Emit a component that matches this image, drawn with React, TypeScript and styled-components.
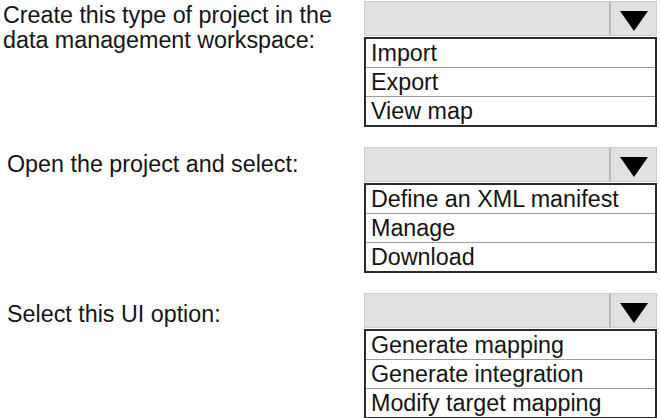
import React from "react";
import styled, { createGlobalStyle } from "styled-components";

const Global = createGlobalStyle`
  html, body { margin: 0; padding: 0; background: #ffffff; }
  body { font-family: "Liberation Sans", Arial, sans-serif; color: #141414; }
`;

const Page = styled.div`
  width: 660px;
  height: 418px;
  box-sizing: border-box;
  padding: 1px 3px 0 0;
  display: flex;
  flex-direction: column;
  gap: 20px;
  overflow: hidden;
`;

const Section = styled.section`
  display: grid;
  grid-template-columns: 1fr 293px;
  align-items: start;
`;

const Label = styled.div<{ $indent: number; $top: number }>`
  font-size: 23.3px;
  line-height: 25px;
  padding-left: ${(p) => p.$indent}px;
  margin-top: ${(p) => p.$top}px;
  color: #151515;
`;

const Widget = styled.div`
  display: flex;
  flex-direction: column;
  gap: 1px;
`;

const SelectBox = styled.div`
  height: 35px;
  box-sizing: border-box;
  display: flex;
  background: #e1e1e1;
  border: 1px solid #cdcdcd;
`;

const Field = styled.div`
  flex: 1;
`;

const ArrowButton = styled.div`
  width: 47px;
  border-left: 2px solid #b9b9b9;
  display: flex;
  align-items: center;
  justify-content: center;
  padding-top: 4px;
  box-sizing: border-box;
`;

const List = styled.ul`
  list-style: none;
  margin: 0;
  padding: 0;
  border: 2px solid #2b2b2b;
  background: #ffffff;
`;

const Option = styled.li`
  height: 28px;
  line-height: 29px;
  font-size: 23.3px;
  padding-left: 5px;
  color: #141414;
  white-space: nowrap;
  & + & {
    border-top: 1px solid #9a9a9a;
  }
`;

const Triangle = () => (
  <svg width="28" height="20" viewBox="0 0 28 20">
    <polygon points="0,0 28,0 14,20" fill="#000" />
  </svg>
);

const sections = [
  {
    label: ["Create this type of project in the", "data management workspace:"],
    indent: 3,
    top: 2,
    options: ["Import", "Export", "View map"],
  },
  {
    label: ["Open the project and select:"],
    indent: 7,
    top: 5,
    options: ["Define an XML manifest", "Manage", "Download"],
  },
  {
    label: ["Select this UI option:"],
    indent: 7,
    top: 9,
    options: ["Generate mapping", "Generate integration", "Modify target mapping"],
  },
];

export default function App() {
  return (
    <>
      <Global />
      <Page>
        {sections.map((s, i) => (
          <Section key={i}>
            <Label $indent={s.indent} $top={s.top}>
              {s.label.map((l, j) => (
                <div key={j}>{l}</div>
              ))}
            </Label>
            <Widget>
              <SelectBox>
                <Field />
                <ArrowButton>
                  <Triangle />
                </ArrowButton>
              </SelectBox>
              <List>
                {s.options.map((o) => (
                  <Option key={o}>{o}</Option>
                ))}
              </List>
            </Widget>
          </Section>
        ))}
      </Page>
    </>
  );
}
